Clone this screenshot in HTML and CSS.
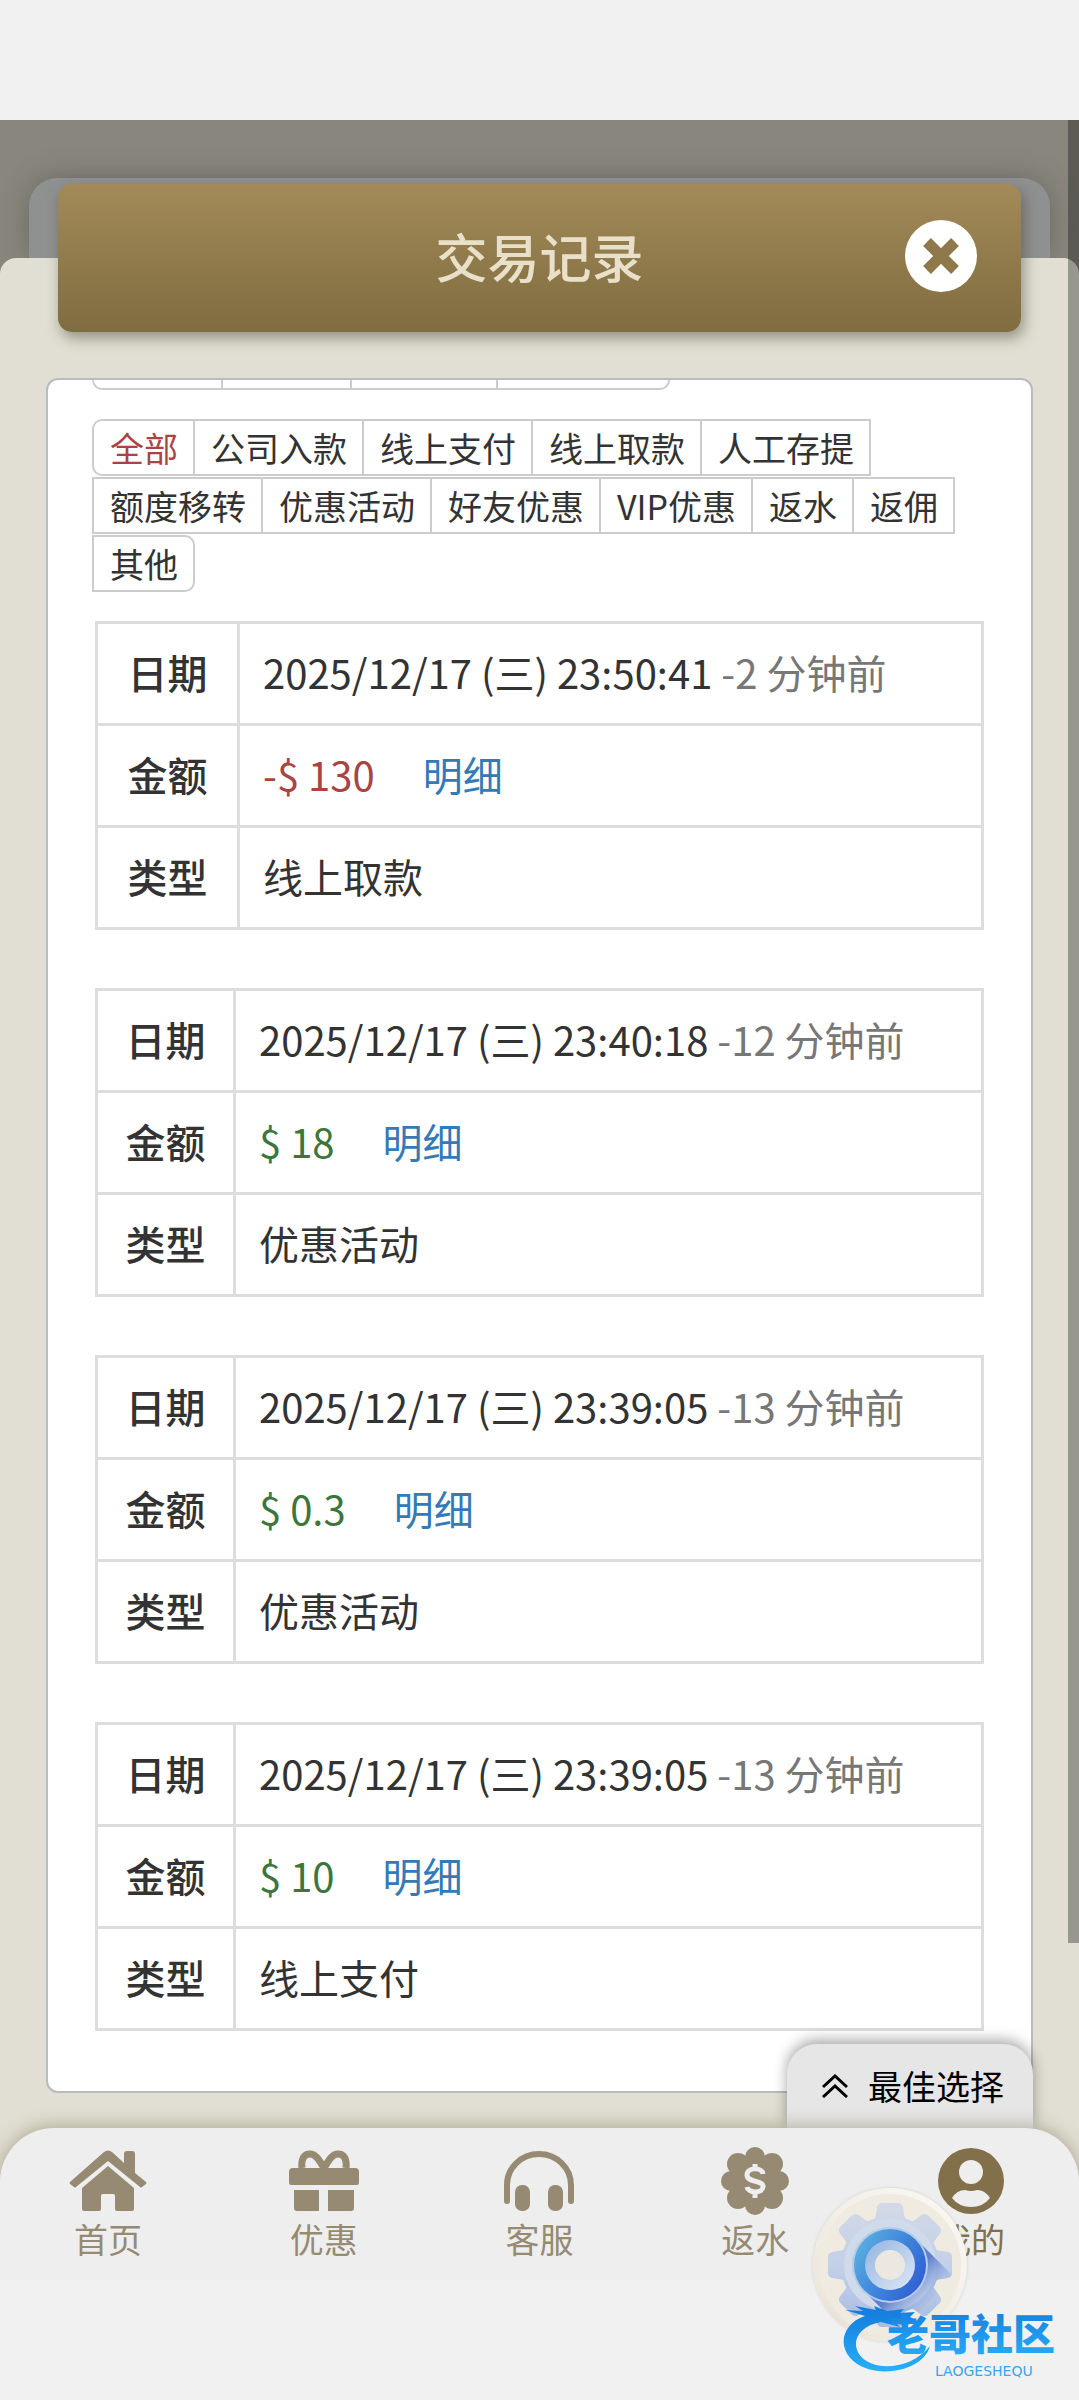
FILE: index.html
```html
<!DOCTYPE html>
<html lang="zh-CN">
<head>
<meta charset="utf-8">
<meta name="viewport" content="width=device-width">
<title>交易记录</title>
<link rel="stylesheet" href="styles.css">
</head>
<body>
<div class="stage">
  <div class="back-card"></div>
  <main class="sheet">
    <header class="title-bar">
      <h1 class="title">交易记录</h1>
      <button class="close" type="button" aria-label="关闭">
        <svg viewBox="-36 -36 72 72" aria-hidden="true"><circle r="36" fill="#fff"/><path d="M-14-14 14 14M14-14-14 14" stroke="#8f7849" stroke-width="11"/></svg>
      </button>
    </header>

    <section class="panel">
      <div class="periods" aria-hidden="true"><i></i><i></i><i></i><i></i></div>
      <div class="filters">
        <button class="filter active" type="button">全部</button>
        <button class="filter" type="button">公司入款</button>
        <button class="filter" type="button">线上支付</button>
        <button class="filter" type="button">线上取款</button>
        <button class="filter" type="button">人工存提</button>
        <button class="filter" type="button">额度移转</button>
        <button class="filter" type="button">优惠活动</button>
        <button class="filter" type="button">好友优惠</button>
        <button class="filter" type="button">VIP优惠</button>
        <button class="filter" type="button">返水</button>
        <button class="filter" type="button">返佣</button>
        <button class="filter" type="button">其他</button>
      </div>

      <div class="records">
        <table class="record wide">
          <tr><th scope="row">日期</th><td><time>2025/12/17 (三) 23:50:41</time> <span class="ago">-2 分钟前</span></td></tr>
          <tr><th scope="row">金额</th><td><span class="out">-$ 130</span><a class="detail" href="#">明细</a></td></tr>
          <tr><th scope="row">类型</th><td>线上取款</td></tr>
        </table>
        <table class="record">
          <tr><th scope="row">日期</th><td><time>2025/12/17 (三) 23:40:18</time> <span class="ago">-12 分钟前</span></td></tr>
          <tr><th scope="row">金额</th><td><span class="in">$ 18</span><a class="detail" href="#">明细</a></td></tr>
          <tr><th scope="row">类型</th><td>优惠活动</td></tr>
        </table>
        <table class="record">
          <tr><th scope="row">日期</th><td><time>2025/12/17 (三) 23:39:05</time> <span class="ago">-13 分钟前</span></td></tr>
          <tr><th scope="row">金额</th><td><span class="in">$ 0.3</span><a class="detail" href="#">明细</a></td></tr>
          <tr><th scope="row">类型</th><td>优惠活动</td></tr>
        </table>
        <table class="record">
          <tr><th scope="row">日期</th><td><time>2025/12/17 (三) 23:39:05</time> <span class="ago">-13 分钟前</span></td></tr>
          <tr><th scope="row">金额</th><td><span class="in">$ 10</span><a class="detail" href="#">明细</a></td></tr>
          <tr><th scope="row">类型</th><td>线上支付</td></tr>
        </table>
      </div>
    </section>
    <button class="best" type="button">
      <svg viewBox="0 0 26 24" aria-hidden="true"><path d="M1 13 13 2 25 13M1 23 13 12 25 23" fill="none" stroke="#000" stroke-width="3"/></svg>
      最佳选择
    </button>
  </main>

  <nav class="nav">
    <a class="nav-item" href="#">
      <svg viewBox="-39 -35 78 70" aria-hidden="true"><path d="M16-27q0-3 3-3h5q3 0 3 3v19L38 1q1 1 0 2l-4 3q-1 1-2 0L0-20-32 6q-1 1-2 0l-4-3q-1-1 0-2L-4-29q4-3 8 0L16-18Z"/><path d="M0-15 26 7v21q0 2-2 2H9q-2 0-2-2V15q0-2-2-2h-10q-2 0-2 2v13q0 2-2 2h-15q-2 0-2-2V7Z"/></svg>
      首页
    </a>
    <a class="nav-item" href="#">
      <svg viewBox="-39 -35 78 70" aria-hidden="true"><path d="M-31-13h62q4 0 4 4V2q0 2-2 2h-66q-2 0-2-2V-9q0-4 4-4ZM-30 9h25v21h-22q-3 0-3-3ZM4 9h26v18q0 3-3 3H4Z"/><path d="M0-13C-6-23-9-27-14-27-20-27-23-22-22-13M0-13C6-23 9-27 14-27 20-27 23-22 22-13" fill="none" stroke="currentColor" stroke-width="7"/></svg>
      优惠
    </a>
    <a class="nav-item" href="#">
      <svg viewBox="-39 -35 78 70" aria-hidden="true"><path d="M-32 20V4a32 31 0 0 1 64 0v16" fill="none" stroke="currentColor" stroke-width="6" stroke-linecap="round"/><rect x="-24" y="4" width="15" height="26" rx="7"/><rect x="9" y="4" width="15" height="26" rx="7"/></svg>
      客服
    </a>
    <a class="nav-item" href="#">
      <svg viewBox="-39 -35 78 70" aria-hidden="true"><circle r="27"/><circle cy="-24" r="10"/><circle cy="24" r="10"/><circle cx="-24" r="10"/><circle cx="24" r="10"/><circle cx="-17" cy="-17" r="11"/><circle cx="17" cy="-17" r="11"/><circle cx="-17" cy="17" r="11"/><circle cx="17" cy="17" r="11"/><path d="M8-7C7-14-8-14-8-6-8 2 9-1 8 6 7 13-7 12-8 6M0-17v6M0 11v6" fill="none" stroke="#eee" stroke-width="5"/></svg>
      返水
    </a>
    <a class="nav-item current" href="#" aria-current="page">
      <svg viewBox="-39 -35 78 70" aria-hidden="true"><circle r="33"/><ellipse cy="-9" rx="12" ry="12" fill="#eee"/><path d="M-19 17Q-14 9-6 9 0 11 6 9 14 9 19 17 12 26 0 26T-19 17Z" fill="#eee"/></svg>
      我的
    </a>
  </nav>
  <div class="scrollbar"></div>
</div>

<div class="floating">
  <svg class="gear" viewBox="-77 -77 154 154" role="img" aria-label="设置">
    <defs>
      <linearGradient id="rim" x1="0" y1="1" x2="1" y2="0"><stop offset="0" stop-color="#d6d0c4"/><stop offset=".2" stop-color="#eee8dd"/><stop offset="1" stop-color="#fbf9f5"/></linearGradient>
      <linearGradient id="metal" gradientUnits="userSpaceOnUse" x1="0" y1="-62" x2="0" y2="62"><stop offset="0" stop-color="#d3d9e6"/><stop offset=".5" stop-color="#c3d0e8"/><stop offset="1" stop-color="#a9bde2"/></linearGradient>
      <linearGradient id="ring" x1="0" y1="0.2" x2="1" y2="0.8"><stop offset="0" stop-color="#5cb1e0"/><stop offset=".5" stop-color="#3f86dc"/><stop offset="1" stop-color="#2f5bd0"/></linearGradient>
      <linearGradient id="core" x1="0" y1="0" x2="1" y2="1"><stop offset="0" stop-color="#94b4df"/><stop offset="1" stop-color="#dfe8f5"/></linearGradient>
      <linearGradient id="cast" gradientUnits="userSpaceOnUse" x1="16" y1="16" x2="44" y2="44"><stop offset="0" stop-color="#5f80cc"/><stop offset="1" stop-color="#a9bfe6" stop-opacity="0"/></linearGradient>
      <path id="tooth" d="M-16-45C-14-48-14-52-13-58q1-4 5-4H8q4 0 5 4C14-52 14-48 16-45Z"/>
      <clipPath id="gear-shape"><circle r="49"/><use href="#tooth"/><use href="#tooth" transform="rotate(45)"/><use href="#tooth" transform="rotate(90)"/><use href="#tooth" transform="rotate(135)"/><use href="#tooth" transform="rotate(180)"/><use href="#tooth" transform="rotate(225)"/><use href="#tooth" transform="rotate(270)"/><use href="#tooth" transform="rotate(315)"/></clipPath>
    </defs>
    <circle r="77" fill="url(#rim)"/>
    <circle r="71" fill="#f0ebe1"/>
    <g clip-path="url(#gear-shape)">
      <rect x="-64" y="-64" width="128" height="128" fill="url(#metal)"/>
      <circle r="46" fill="#cfdaeb"/>
      <path d="M26-26 64 12 12 64-26 26Z" fill="url(#cast)"/>
    </g>
    <circle r="38" fill="#b5cbe8"/>
    <circle r="36" fill="url(#ring)"/>
    <circle r="25" fill="url(#core)"/>
    <circle r="15" fill="#ece8df"/>
  </svg>
  <svg class="brand" viewBox="0 0 224 76" role="img" aria-label="老哥社区 LAOGESHEQU">
    <defs><linearGradient id="sea" x1="0" y1="0" x2="0" y2="1"><stop offset="0" stop-color="#1479dc"/><stop offset="1" stop-color="#27b0f7"/></linearGradient></defs>
    <path d="M2 8 20 9 12 4 33 8 31 4 44 9 61 7 57 11 72 10 67 15 71 17 62 19 66 23 54 22 57 25 38 20C16 24 8 39 16 52 27 69 66 70 87 44 81 66 47 74 25 67-8 56-6 23 22 14Z" fill="url(#sea)"/>
    <text class="brand-name" x="44" y="48" fill="url(#sea)">老哥社区</text>
    <text class="brand-latin" x="92" y="74" fill="#3fa4ea">LAOGESHEQU</text>
  </svg>
</div>
</body>
</html>
```
FILE: styles.css
```css
* {
  box-sizing: border-box;
}

body {
  position: relative;
  min-height: 100vh;
  margin: 0;
  padding: 120px 0;
  background: #f1f1f1;
  color: #333;
  font-family: "Noto Sans CJK SC", "Noto Sans", sans-serif;
  font-size: 40px;
  line-height: 56px;
}

button {
  margin: 0;
  border: 0;
  background: none;
  color: inherit;
  font: inherit;
}

a {
  text-decoration: none;
}

svg {
  display: block;
  flex: none;
}

/* Page behind the sheet */
.stage {
  position: relative;
  padding-top: 58px;
  background: linear-gradient(#89867d 0, #89867d 160px, #e1dfd3 160px);
}

.back-card {
  height: 80px;
  margin: 0 29px;
  border-radius: 28px 28px 0 0;
  background: #8f9090;
  box-shadow: 0 0 28px rgba(60, 66, 60, 0.4);
}

.sheet {
  position: relative;
  padding: 0 46px 35px;
  border-radius: 16px 16px 0 0;
  background: #e1dfd3;
}

.title-bar {
  position: relative;
  top: -74px;
  display: flex;
  align-items: center;
  justify-content: center;
  height: 148px;
  margin: 0 12px -28px;
  padding-bottom: 4px;
  border-radius: 14px;
  background: linear-gradient(#a38a58, #7f6c40);
  box-shadow: 3px 6px 14px rgba(70, 70, 50, 0.5);
}

.title {
  margin: 0;
  color: #e9e0ca;
  font-size: 52px;
  font-weight: 500;
  line-height: 72px;
}

.close {
  position: absolute;
  right: 44px;
  padding: 0;
}

.close svg {
  width: 72px;
  height: 72px;
}

/* White panel */
.panel {
  padding: 0 44px 60px;
  border: 2px solid #bbb;
  border-radius: 12px;
  background: #fff;
}

.periods {
  display: flex;
  height: 10px;
  margin-bottom: 29px;
}

.periods i {
  width: 129px;
  border: solid #ccc;
  border-width: 0 2px 2px 0;
}

.periods i:first-child {
  width: 131px;
  border-left-width: 2px;
  border-bottom-left-radius: 10px;
}

.periods i:nth-child(3) {
  width: 146px;
}

.periods i:last-child {
  width: 172px;
  border-bottom-right-radius: 10px;
}

.filters {
  display: flex;
  flex-wrap: wrap;
  row-gap: 1px;
  padding-left: 2px;
}

.filter {
  height: 57px;
  margin-left: -2px;
  padding: 0 15px 0 16px;
  border: 2px solid #ccc;
  font-size: 34px;
  line-height: 50px;
}

.filter:first-child {
  border-radius: 10px 0 0 10px;
}

.filter:last-child {
  border-radius: 0 10px 10px 0;
}

.filter.active {
  color: #a94442;
}

.records {
  display: grid;
  gap: 58px;
  padding: 29px 3px 0;
}

.record {
  width: 100%;
  border-collapse: collapse;
}

.record th,
.record td {
  height: 102px;
  padding: 0 0 3px;
  border: 3px solid #ddd;
}

.record th {
  width: 138px;
  font-weight: 500;
}

.record.wide th {
  width: 142px;
}

.record td {
  padding-left: 23px;
  text-align: left;
}

.ago {
  color: #777;
}

.out {
  color: #a94442;
}

.in {
  color: #3c763d;
}

.detail {
  margin-left: 48px;
  color: #337ab7;
}

/* Bottom bar */
.best {
  position: absolute;
  right: 46px;
  bottom: 0;
  display: flex;
  align-items: center;
  gap: 20px;
  height: 84px;
  padding: 0 29px 0 35px;
  border-radius: 30px 30px 0 0;
  background: #e6e6e6;
  box-shadow: 0 -4px 14px rgba(0, 0, 0, 0.35);
  color: #000;
  font-size: 34px;
  line-height: 48px;
}

.best svg {
  width: 26px;
  height: 24px;
}

.nav {
  position: relative;
  display: grid;
  grid-template-columns: repeat(5, 1fr);
  height: 152px;
  padding-top: 18px;
  border-radius: 54px 54px 0 0;
  background: #eee;
  box-shadow: 0 -2px 18px rgba(80, 70, 30, 0.35);
  clip-path: inset(-40px 0 0 0);
}

.nav-item {
  display: flex;
  flex-direction: column;
  align-items: center;
  color: #968a72;
  font-size: 34px;
  line-height: 46px;
}

.nav-item svg {
  width: 78px;
  height: 70px;
  fill: currentColor;
  overflow: visible;
}

.nav-item.current {
  color: #82704a;
}

.scrollbar {
  position: absolute;
  top: 0;
  right: 0;
  width: 11px;
  height: 84.4%;
  background: rgba(0, 0, 0, 0.32);
}

/* Floating settings button and brand mark */
.floating {
  position: absolute;
  right: 12px;
  bottom: 22px;
  width: 254px;
  height: 190px;
}

.gear {
  position: absolute;
  top: 0;
  left: 0;
  width: 154px;
  height: 154px;
  border-radius: 50%;
  box-shadow: 0 0 3px rgba(190, 185, 175, 0.6);
}

.brand {
  position: absolute;
  left: 30px;
  bottom: 0;
  width: 224px;
  height: 76px;
}

.brand-name {
  font-size: 42px;
  font-weight: 900;
}

.brand-latin {
  font-family: "DejaVu Sans", sans-serif;
  font-size: 14px;
}
```
